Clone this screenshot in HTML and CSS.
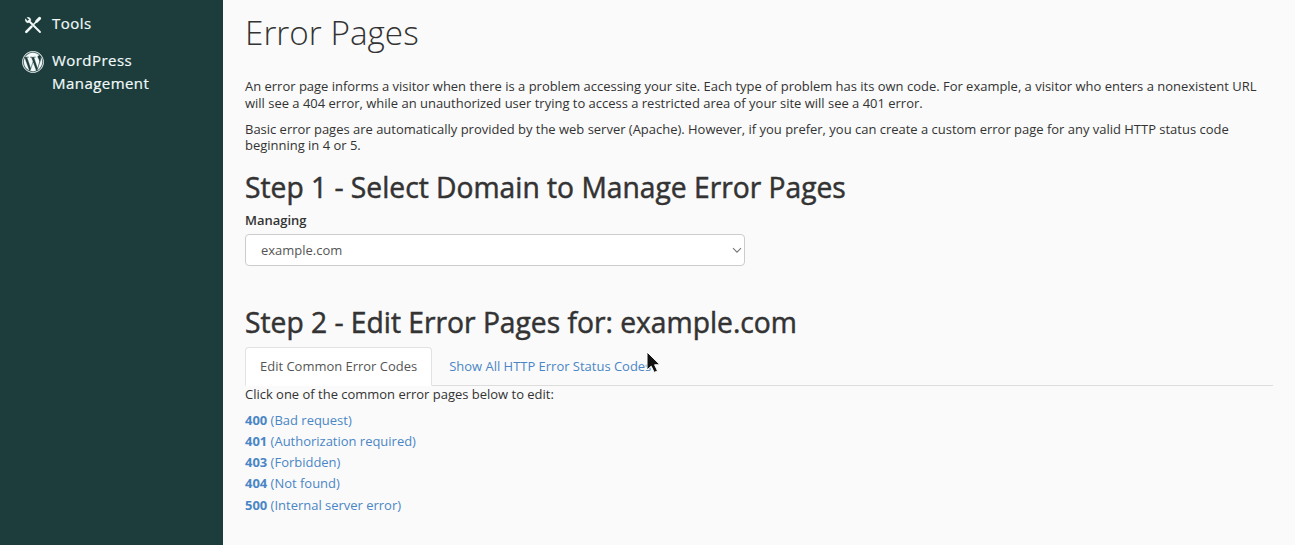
FILE: index.html
```html
<!DOCTYPE html>
<html lang="en">
<head>
    <meta charset="UTF-8">
    <meta name="viewport" content="width=device-width, initial-scale=1.0">
    <title>Error Pages</title>
    <link rel="stylesheet" href="styles.css">
</head>
<body>
    <nav class="sidebar">
        <a href="#" class="nav-item">
            <span class="nav-icon">
                <svg width="18" height="18" viewBox="0 0 18 18" fill="none" stroke="#f2fafa" stroke-linecap="round">
                    <path d="M5.5 5.5L16 16" stroke-width="1.9"/>
                    <path d="M1.6 3.3L3.6 5.3L5.3 3.6L3.3 1.6C5.2 1 7.2 2.6 6.5 4.7L4.7 6.5C2.6 7.2 1 5.2 1.6 3.3Z" fill="#f2fafa" stroke-width="0.8"/>
                    <path d="M2.3 15.9L7.5 10.7" stroke-width="2.6"/>
                    <path d="M9.8 8.3L12.7 5.3" stroke-width="1.6"/>
                    <path d="M12.7 5.3L15.6 2.4" stroke-width="3"/>
                </svg>
            </span>
            <span>Tools</span>
        </a>
        <a href="#" class="nav-item">
            <span class="nav-icon">
                <svg width="22" height="22" viewBox="0 0 512 512" fill="#f2fafa" stroke="#f2fafa" stroke-width="8">
                    <path d="M61.7 169.4l101.5 278C92.2 413 43.3 340.2 43.3 256c0-30.9 6.6-60.1 18.4-86.6zm337.9 75.9c0-26.3-9.4-44.5-17.5-58.7-10.8-17.5-20.9-32.4-20.9-49.9 0-19.6 14.8-37.8 35.7-37.8.9 0 1.8.1 2.8.2-37.9-34.7-88.3-55.9-143.7-55.9-74.3 0-139.7 38.1-177.8 95.9 5 .2 9.7.3 13.7.3 22.2 0 56.7-2.7 56.7-2.7 11.5-.7 12.8 16.2 1.4 17.5 0 0-11.5 1.3-24.3 2l77.5 230.4L249.8 247l-33.1-90.8c-11.5-.7-22.3-2-22.3-2-11.5-.7-10.1-18.2 1.3-17.5 0 0 35.1 2.7 56 2.7 22.2 0 56.7-2.7 56.7-2.7 11.5-.7 12.8 16.2 1.4 17.5 0 0-11.5 1.3-24.3 2l76.9 228.7 21.2-70.9c9-29.4 16-50.5 16-68.7zm-139.9 29.3l-63.8 185.5c19.1 5.6 39.2 8.7 60.1 8.7 24.8 0 48.5-4.3 70.6-12.1-.6-.9-1.1-1.9-1.5-2.9l-65.4-179.2zm183-120.7c.9 6.8 1.4 14 1.4 21.9 0 21.6-4 45.8-16.2 76.2l-65 187.9C426.2 403 468.7 334.5 468.7 256c0-37-9.4-71.8-26-102.1zM504 256c0 136.8-111.3 248-248 248C119.2 504 8 392.7 8 256 8 119.2 119.2 8 256 8c136.7 0 248 111.2 248 248zm-11.4 0c0-130.5-106.2-236.6-236.6-236.6C125.5 19.4 19.4 125.5 19.4 256S125.6 492.6 256 492.6c130.5 0 236.6-106.1 236.6-236.6z"/>
                </svg>
            </span>
            <span>WordPress Management</span>
        </a>
    </nav>

    <main class="content">
        <h1>Error Pages</h1>
        <p>An error page informs a visitor when there is a problem accessing your site. Each type of problem has its own code. For example, a visitor who enters a nonexistent URL will see a 404 error, while an unauthorized user trying to access a restricted area of your site will see a 401 error.</p>
        <p>Basic error pages are automatically provided by the web server (Apache). However, if you prefer, you can create a custom error page for any valid HTTP status code beginning in 4 or 5.</p>

        <h2>Step 1 - Select Domain to Manage Error Pages</h2>
        <label for="domain">Managing</label>
        <div class="select-wrap">
            <select id="domain" class="form-control">
                <option>example.com</option>
            </select>
            <svg class="chevron" width="10" height="7" viewBox="0 0 10 7" fill="none" stroke="#777" stroke-width="1.1">
                <path d="M1 1.2L5 5.2L9 1.2"/>
            </svg>
        </div>

        <h2 class="step-two">Step 2 - Edit Error Pages for: example.com</h2>
        <ul class="tabs">
            <li><a href="#" class="active">Edit Common Error Codes</a></li>
            <li><a href="#">Show All HTTP Error Status Codes</a></li>
        </ul>
        <p class="hint">Click one of the common error pages below to edit:</p>
        <ul class="codes">
            <li><a href="#"><strong>400</strong> (Bad request)</a></li>
            <li><a href="#"><strong>401</strong> (Authorization required)</a></li>
            <li><a href="#"><strong>403</strong> (Forbidden)</a></li>
            <li><a href="#"><strong>404</strong> (Not found)</a></li>
            <li><a href="#"><strong>500</strong> (Internal server error)</a></li>
        </ul>
    </main>

    <svg class="cursor" width="17" height="24" viewBox="0 0 17 24">
        <path d="M2 2V20L6.2 16.2L9.2 22.4L12.5 20.9L9.6 14.8H15Z" fill="#111" stroke="#fff" stroke-width="1"/>
    </svg>
</body>
</html>
```

FILE: styles.css
```css
* {
    box-sizing: border-box;
}
body {
    display: flex;
    height: 545px;
    margin: 0;
    overflow: hidden;
    background-color: #fafafa;
    color: #333;
    font-family: "Open Sans", sans-serif;
    font-size: 12.97px;
    line-height: 16.7px;
}
a {
    color: #4a86c5;
    text-decoration: none;
}
h1, h2, p, ul {
    margin: 0;
    padding: 0;
}
ul {
    list-style: none;
}
.sidebar {
    flex: 0 0 223px;
    padding: 12px 40px 0 22px;
    background-color: #1d3d3c;
}
.nav-item {
    display: flex;
    gap: 8px;
    margin-bottom: 11px;
    color: #f2fafa;
    font-size: 15px;
    line-height: 23px;
    letter-spacing: 0.45px;
    -webkit-text-stroke: 0.2px #f2fafa;
}
.nav-icon {
    display: flex;
    flex: 0 0 22px;
    justify-content: center;
    align-items: center;
    height: 26px;
}
.content {
    flex: 1;
    padding: 11px 22px 0 22px;
}
h1 {
    margin-bottom: 25px;
    font-size: 33.3px;
    font-weight: 300;
    line-height: 42px;
}
p {
    margin-bottom: 9.2px;
}
h2 {
    margin-top: 16px;
    font-size: 28.23px;
    font-weight: 400;
    line-height: 34px;
    -webkit-text-stroke: 0.5px #333;
}
label {
    display: block;
    margin: 8px 0 5px;
    font-weight: 600;
}
.select-wrap {
    position: relative;
    width: 500px;
}
.form-control {
    display: block;
    width: 100%;
    height: 32px;
    padding: 1px 15px 0;
    border: 1px solid #ccc;
    border-radius: 4px;
    background-color: #fff;
    color: #555;
    font: inherit;
    appearance: none;
}
.chevron {
    position: absolute;
    top: 13px;
    right: 3px;
}
.step-two {
    margin-top: 39px;
}
.tabs {
    display: flex;
    gap: 2px;
    margin-top: 8px;
    border-bottom: 1px solid #ddd;
}
.tabs a {
    display: block;
    margin-bottom: -1px;
    padding: 10px 14px 11px;
    border: 1px solid transparent;
    border-radius: 4px 4px 0 0;
}
.tabs .active {
    border-color: #e2e2e2;
    border-bottom-color: #fff;
    background-color: #fff;
    color: #555;
}
.hint {
    margin-bottom: 6.6px;
}
.codes {
    line-height: 21.25px;
}
.cursor {
    position: absolute;
    top: 350px;
    left: 645px;
}
```
